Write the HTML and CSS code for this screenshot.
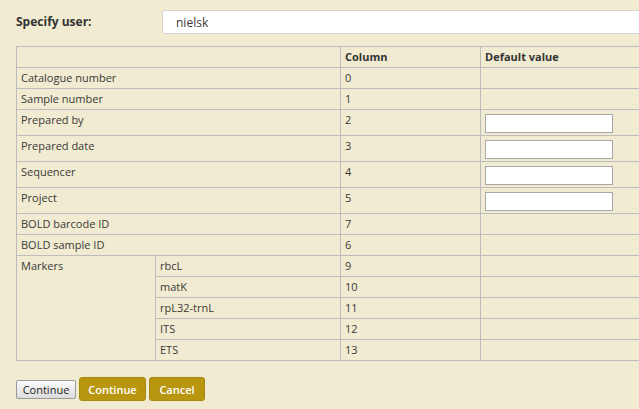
FILE: index.html
```html
<!DOCTYPE html>
<html>
<head>
<meta charset="utf-8">
<link rel="stylesheet" href="styles.css">
</head>
<body>
<div class="page">
  <div class="user-row">
    <label class="user-label">Specify user:</label>
    <input class="user-input" type="text" value="nielsk">
  </div>
  <table class="map">
    <colgroup>
      <col class="c-label"><col class="c-sub"><col class="c-col"><col class="c-def">
    </colgroup>
    <thead>
      <tr><th colspan="2"></th><th>Column</th><th>Default value</th></tr>
    </thead>
    <tbody>
      <tr><td colspan="2">Catalogue number</td><td>0</td><td></td></tr>
      <tr><td colspan="2">Sample number</td><td>1</td><td></td></tr>
      <tr class="tall"><td colspan="2">Prepared by</td><td>2</td><td><input class="def-input" type="text"></td></tr>
      <tr class="tall"><td colspan="2">Prepared date</td><td>3</td><td><input class="def-input" type="text"></td></tr>
      <tr class="tall"><td colspan="2">Sequencer</td><td>4</td><td><input class="def-input" type="text"></td></tr>
      <tr class="tall"><td colspan="2">Project</td><td>5</td><td><input class="def-input" type="text"></td></tr>
      <tr><td colspan="2">BOLD barcode ID</td><td>7</td><td></td></tr>
      <tr><td colspan="2">BOLD sample ID</td><td>6</td><td></td></tr>
      <tr><td rowspan="5">Markers</td><td>rbcL</td><td>9</td><td></td></tr>
      <tr><td>matK</td><td>10</td><td></td></tr>
      <tr><td>rpL32-trnL</td><td>11</td><td></td></tr>
      <tr><td>ITS</td><td>12</td><td></td></tr>
      <tr><td>ETS</td><td>13</td><td></td></tr>
    </tbody>
  </table>
  <div class="actions">
    <button class="btn-plain" type="button">Continue</button>
    <button class="btn-gold btn-continue" type="button">Continue</button>
    <button class="btn-gold btn-cancel" type="button">Cancel</button>
  </div>
</div>
</body>
</html>
```
FILE: styles.css
```css
html, body {
  margin: 0;
  padding: 0;
  overflow: hidden;
  background: #f1ebd1;
}
body {
  font-family: "Open Sans", "Liberation Sans", sans-serif;
  font-size: 11px;
  color: #3a3a3a;
}
.page {
  padding: 10px 0 0 16px;
  width: 700px;
}
.user-row {
  display: flex;
  align-items: flex-start;
  height: 24px;
}
.user-label {
  width: 146px;
  font-weight: bold;
  font-size: 12px;
  padding-top: 3px;
  color: #333;
}
.user-input {
  box-sizing: border-box;
  width: 540px;
  height: 24px;
  border: 1px solid #d4d4d4;
  border-radius: 3px;
  background: #fff;
  padding: 0 13px;
  font-family: inherit;
  font-size: 12px;
  color: #3a3a3a;
  margin: 0;
}
.map {
  margin-top: 12px;
  border-collapse: collapse;
  table-layout: fixed;
  width: 680px;
}
.c-label { width: 139px; }
.c-sub { width: 185px; }
.c-col { width: 140px; }
.c-def { width: 216px; }
.map th, .map td {
  border: 1px solid #bcbcbc;
  padding: 3px 4px 0;
  text-align: left;
  vertical-align: top;
  height: 17px;
  line-height: 14px;
  white-space: nowrap;
}
.map th {
  font-weight: bold;
  color: #333;
}
.map tr.tall td {
  height: 22px;
}
.def-input {
  display: block;
  box-sizing: border-box;
  width: 128px;
  height: 19px;
  margin: 1px 0 0;
  border: 1px solid #a9a9a9;
  background: #fff;
  padding: 0;
}
.actions {
  display: flex;
  align-items: center;
  margin-top: 16px;
}
.btn-plain {
  box-sizing: border-box;
  height: 19px;
  width: 60px;
  padding: 0;
  margin-right: 3px;
  font-family: inherit;
  font-size: 11px;
  color: #222;
  border: 1px solid #9a9a9a;
  border-radius: 2px;
  background: linear-gradient(#fbfbfb, #dcdcdc);
}
.btn-gold {
  box-sizing: border-box;
  height: 24px;
  padding: 0;
  font-family: inherit;
  font-size: 11px;
  font-weight: 600;
  color: #fff;
  background: #b9960f;
  border: 1px solid #a8880c;
  border-radius: 3px;
}
.btn-continue { width: 67px; margin-right: 3px; }
.btn-cancel { width: 56px; }
```
